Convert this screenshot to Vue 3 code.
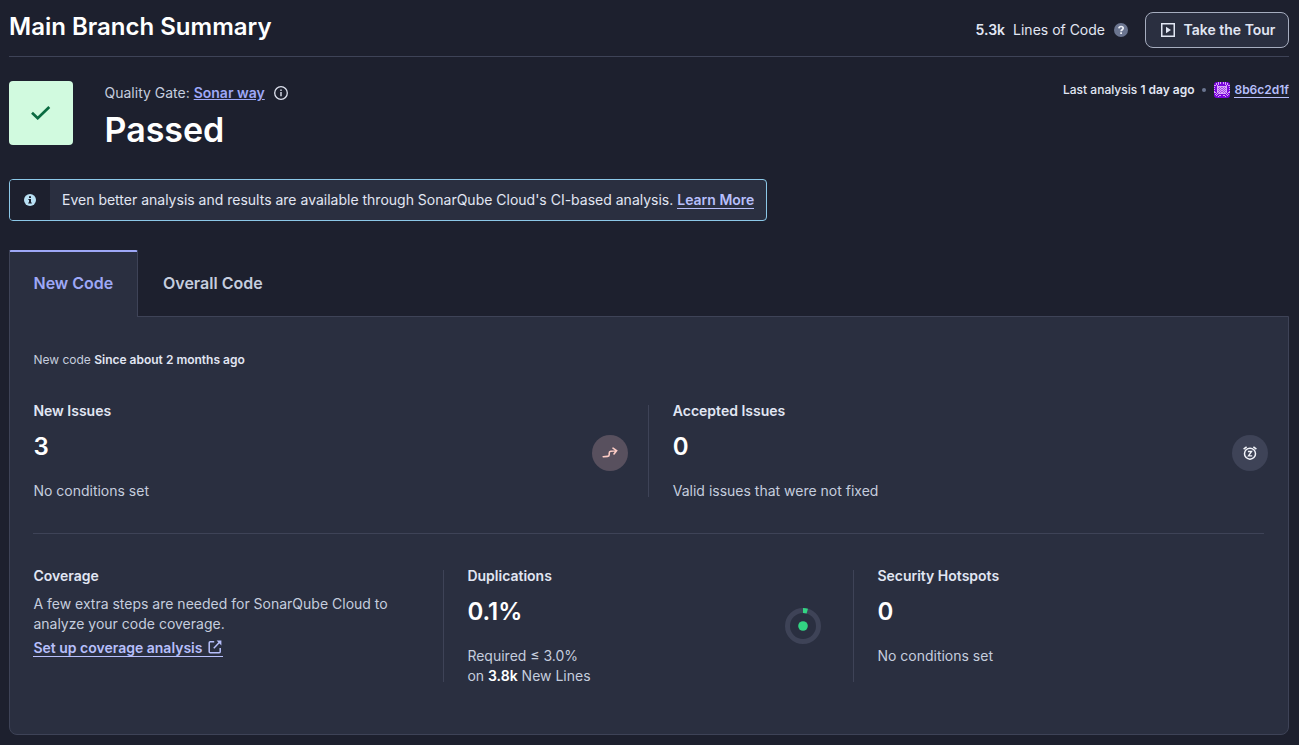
<script setup>
// One half of the mirrored 16x16 commit avatar; each row is reflected around the centre.
const avatarRows = [
  '00001010',
  '00101010',
  '00101000',
  '11010000',
  '00011111',
  '10011010',
  '00010101',
  '10011010',
  '00010101',
  '10011010',
  '11010101',
  '00101111',
  '01010000',
  '00100110',
  '00001000',
  '00000000',
]
const pixels = avatarRows.flatMap((half, y) =>
  [...half, ...[...half].reverse()].flatMap((v, x) => (v === '1' ? [{ x, y }] : []))
)
</script>

<template>
  <main class="page">
    <header class="header">
      <h1>Main Branch Summary</h1>
      <div class="header-side">
        <span class="lines"><b>5.3k</b><span>Lines of Code</span></span>
        <svg class="help" width="14" height="14" viewBox="0 0 14 14">
          <circle cx="7" cy="7" r="7" fill="#6b7590" />
          <path d="M4.9 5.4C5 4.2 5.9 3.5 7.1 3.5c1.1 0 2.1.7 2.1 1.8 0 1.4-2.1 1.5-2.1 3" fill="none" stroke="#eef0f6" stroke-width="1.7" />
          <rect x="6.2" y="9.3" width="1.8" height="1.7" fill="#eef0f6" />
        </svg>
        <button class="tour">
          <svg width="14" height="14" viewBox="0 0 14 14">
            <rect x=".75" y=".75" width="12.5" height="12.5" fill="none" stroke="#e1e6f3" stroke-width="1.5" />
            <path d="M5 3.8L10 7 5 10.2z" fill="#e1e6f3" />
          </svg>
          Take the Tour
        </button>
      </div>
    </header>

    <section class="gate">
      <div class="gate-badge">
        <svg width="20" height="14" viewBox="0 0 20 14">
          <path d="M1 6.8L6.7 12.2 18.3 1" fill="none" stroke="#0a6b41" stroke-width="2.7" />
        </svg>
      </div>
      <div class="gate-text">
        <div class="gate-label">
          Quality Gate:&nbsp;<a class="gate-link">Sonar way</a>
          <svg width="14" height="14" viewBox="0 0 14 14">
            <circle cx="7" cy="7" r="6.3" fill="none" stroke="#dde1ee" stroke-width="1.3" />
            <path d="M7 6v4.2M7 3.6v1.5" stroke="#dde1ee" stroke-width="1.4" />
          </svg>
        </div>
        <div class="gate-status">Passed</div>
      </div>
      <div class="analysis">
        <span>Last analysis <b>1 day ago</b></span>
        <i class="dot"></i>
        <svg class="avatar" width="16" height="16" viewBox="0 0 16 16" shape-rendering="crispEdges">
          <rect width="16" height="16" fill="#7a05dc" />
          <rect x="4" y="5" width="8" height="6" fill="#a44be8" />
          <rect v-for="p in pixels" :key="p.x + '-' + p.y" :x="p.x" :y="p.y" width="1" height="1" fill="#d9a6f7" />
        </svg>
        <a class="link commit">8b6c2d1f</a>
      </div>
    </section>

    <div class="banner">
      <div class="banner-icon">
        <svg width="12" height="12" viewBox="0 0 12 12">
          <circle cx="6" cy="6" r="6" fill="#b9e0f4" />
          <path d="M5 2.3h2v1.6H5zM4.4 5H7v3.4h.8v1.1H4.2V8.4H5V6.1h-.6z" fill="#1d202e" />
        </svg>
      </div>
      <div class="banner-text">
        Even better analysis and results are available through SonarQube Cloud's CI-based analysis.&nbsp;<a class="link">Learn More</a>
      </div>
    </div>

    <nav class="tabs">
      <div class="tab active">New Code</div>
      <div class="tab">Overall Code</div>
    </nav>

    <section class="panel">
      <p class="period">New code <b>Since about 2 months ago</b></p>

      <div class="row row-top">
        <article class="cell">
          <div>
            <h2>New Issues</h2>
            <div class="value">3</div>
            <p>No conditions set</p>
          </div>
          <div class="disc issue">
            <svg width="16" height="12" viewBox="0 0 16 12">
              <path d="M1.2 9.8L5.6 9.4Q7.2 9.3 7.2 7.8V6.2Q7.2 4.4 8.8 4.2L14.3 3.6M11 1.1L14.6 3.6 12 6.9" fill="none" stroke="#fdccc5" stroke-width="1.6" stroke-linecap="round" />
            </svg>
          </div>
        </article>
        <article class="cell">
          <div>
            <h2>Accepted Issues</h2>
            <div class="value">0</div>
            <p>Valid issues that were not fixed</p>
          </div>
          <div class="disc snooze">
            <svg width="16" height="16" viewBox="0 0 16 16">
              <circle cx="8" cy="8.7" r="5.5" fill="none" stroke="#f2f4fa" stroke-width="1.5" />
              <path d="M1.6 4.2L4.6 1.8M14.4 4.2L11.4 1.8" stroke="#f2f4fa" stroke-width="1.5" />
              <path d="M5.9 6.5H9.6L6.5 10.8H10.2" fill="none" stroke="#f2f4fa" stroke-width="1.3" />
            </svg>
          </div>
        </article>
      </div>

      <div class="row row-bottom">
        <article class="cell">
          <div>
            <h2>Coverage</h2>
            <p class="steps">A few extra steps are needed for SonarQube Cloud to analyze your code coverage.</p>
            <a class="link setup">Set up coverage analysis<svg width="14" height="14" viewBox="0 0 14 14">
                <path d="M6.2 1.8H2.2Q1.2 1.8 1.2 2.8V11.8Q1.2 12.8 2.2 12.8H11.2Q12.2 12.8 12.2 11.8V8" fill="none" stroke="#b7bffb" stroke-width="1.5" />
                <path d="M5.8 8.2L12.2 1.6" stroke="#b7bffb" stroke-width="1.5" />
                <path d="M8.6.4H13.4V5.4z" fill="#b7bffb" />
              </svg></a>
          </div>
        </article>
        <article class="cell">
          <div>
            <h2>Duplications</h2>
            <div class="value">0.1%</div>
            <p>Required ≤ 3.0%<br />on <b>3.8k</b> New Lines</p>
          </div>
          <svg class="ring" width="36" height="36" viewBox="0 0 36 36">
            <circle cx="18" cy="18" r="15.5" fill="none" stroke="#3e4357" stroke-width="5" />
            <path d="M18 2.5A15.5 15.5 0 0 1 22.3 3.1" fill="none" stroke="#32d583" stroke-width="5" />
            <circle cx="18" cy="18" r="4.8" fill="#32d583" />
          </svg>
        </article>
        <article class="cell">
          <div>
            <h2>Security Hotspots</h2>
            <div class="value">0</div>
            <p>No conditions set</p>
          </div>
        </article>
      </div>
    </section>
  </main>
</template>

<style>
body {
  background: #1d202e;
}
</style>

<style scoped>
* {
  box-sizing: border-box;
}
.page {
  height: 745px;
  padding: 0 10px 0 9px;
  overflow: hidden;
  background: #1d202e;
  color: #e1e6f3;
  font: 400 14px/20px Inter, "Liberation Sans", sans-serif;
}
h1, h2, p {
  margin: 0;
}
b {
  font-weight: 600;
}
svg {
  display: block;
  flex: none;
}
.header {
  display: flex;
  justify-content: space-between;
  height: 57px;
  border-bottom: 1px solid #3e4357;
}
h1 {
  padding-top: 11px;
  color: #fff;
  font-size: 24px;
  font-weight: 600;
  line-height: 32px;
}
.header-side {
  display: flex;
  align-items: center;
  height: 36px;
  margin-top: 12px;
}
.lines {
  display: flex;
  gap: 8px;
}
.help {
  margin: 0 17px 0 9px;
}
.tour {
  display: flex;
  align-items: center;
  justify-content: center;
  gap: 9px;
  width: 144px;
  height: 36px;
  padding: 0 0 0 2px;
  border: 1px solid #a6adbf;
  border-radius: 8px;
  background: #2a2f40;
  color: #e1e6f3;
  font: 600 14px/20px Inter, sans-serif;
}
.gate {
  display: flex;
  height: 64px;
  margin-top: 24px;
}
.gate-badge {
  display: flex;
  align-items: center;
  justify-content: center;
  width: 64px;
  height: 64px;
  padding-right: 1px;
  border-radius: 4px;
  background: #d1fadf;
}
.gate-text {
  margin-left: 31.5px;
}
.gate-label {
  display: flex;
  align-items: center;
  height: 20px;
  margin-top: 2px;
  color: #c5cdde;
}
.gate-label svg {
  margin-left: 9px;
}
.gate-link {
  color: #9ea8f7;
  font-weight: 600;
  text-decoration: underline;
}
.gate-status {
  margin-top: 5px;
  color: #fff;
  font-size: 34px;
  font-weight: 600;
  line-height: 44px;
}
.analysis {
  display: flex;
  align-items: center;
  height: 18px;
  margin-left: auto;
  font-size: 12px;
  font-weight: 500;
}
.dot {
  width: 4px;
  height: 4px;
  margin: 0 8px;
  border-radius: 50%;
  background: #6b7590;
}
.avatar {
  margin-right: 4px;
  border-radius: 3px;
}
.link {
  border-bottom: 1px solid #b7bffb;
  color: #b7bffb;
  font-weight: 600;
}
.commit {
  line-height: 15px;
}
.banner {
  display: flex;
  width: 758px;
  height: 42px;
  margin-top: 34px;
  border: 1px solid #8cc8e8;
  border-radius: 4px;
  background: #2a2f40;
}
.banner-icon {
  display: flex;
  align-items: center;
  justify-content: center;
  width: 40px;
  border-radius: 3px 0 0 3px;
  background: #1d202e;
}
.banner-text {
  padding: 10px 0 0 12px;
  white-space: nowrap;
}
.tabs {
  display: flex;
  height: 67px;
  margin: 29px 0 -1px;
}
.tab {
  padding: 23px 25px 0;
  color: #c5cdde;
  font-size: 16px;
  font-weight: 600;
  line-height: 20px;
}
.tab.active {
  z-index: 1;
  width: 129px;
  padding: 21px 0 0 23.5px;
  border: solid #3e4357;
  border-width: 0 1px;
  border-top: 2px solid #9ea8f7;
  border-radius: 2px 2px 0 0;
  background: #2a2f40;
  color: #9ea8f7;
}
.panel {
  height: 419px;
  padding: 33px 24px 0 23.4px;
  border: 1px solid #3e4357;
  border-radius: 0 0 8px 8px;
  background: #2a2f40;
}
.period {
  color: #c5cdde;
  font-size: 12px;
}
.period b {
  color: #e1e6f3;
}
.row {
  display: grid;
}
.row-top {
  grid-template-columns: 639.4px 1fr;
  height: 133px;
  margin-top: 31px;
  border-bottom: 1px solid #3e4357;
}
.row-bottom {
  grid-template-columns: 434px 410px 1fr;
  margin-top: 32px;
}
.cell {
  position: relative;
  display: flex;
  justify-content: space-between;
}
.row-top .cell {
  height: 100px;
}
.row-bottom .cell {
  height: 120px;
}
.cell:not(:last-child)::after {
  content: "";
  position: absolute;
  top: 4px;
  right: 23.4px;
  bottom: 4px;
  width: 1px;
  background: #3e4357;
}
.row-top .cell:first-child::after {
  right: 23.8px;
}
h2 {
  color: #e1e6f3;
  font-size: 14px;
  font-weight: 600;
  line-height: 20px;
}
.value {
  margin: 10px 0 18px;
  color: #fff;
  font-size: 24px;
  font-weight: 600;
  line-height: 32px;
}
.cell p {
  color: #c5cdde;
}
.cell p b {
  color: #fff;
}
.disc {
  display: flex;
  flex: none;
  align-items: center;
  justify-content: center;
  width: 36px;
  height: 36px;
  margin-top: 34px;
  border-radius: 50%;
}
.issue {
  margin-right: 44.8px;
  background: #58505e;
}
.snooze {
  margin-right: -4px;
  background: #3e4357;
}
.cell .steps {
  width: 370px;
  margin: 8px 0 4px;
}
.setup svg {
  display: inline-block;
  margin: 0 1px 0 6px;
  vertical-align: -1px;
}
.ring {
  margin: 42px 56.4px 0 0;
}
</style>
